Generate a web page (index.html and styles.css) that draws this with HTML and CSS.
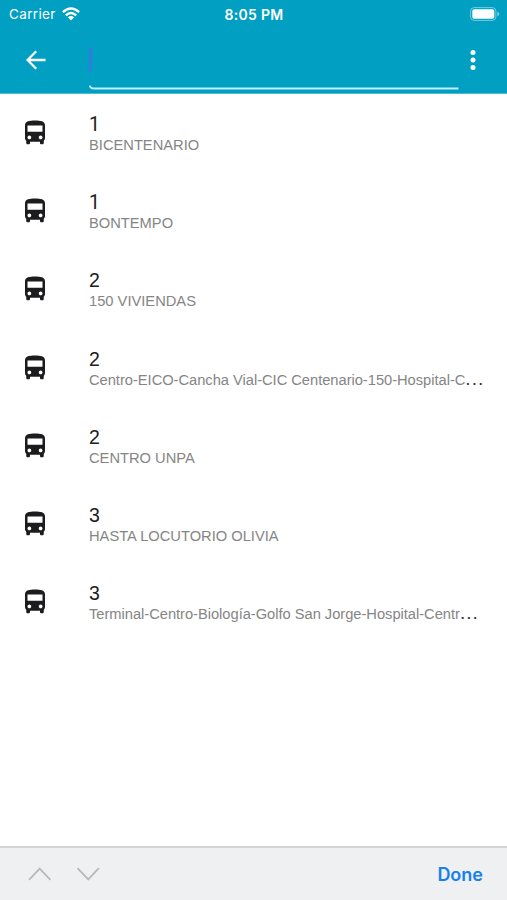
FILE: index.html
```
<!DOCTYPE html>
<html lang="es">
<head>
<meta charset="utf-8">
<title>Recorridos</title>
<link rel="stylesheet" href="styles.css">
</head>
<body>
<svg class="defs" aria-hidden="true">
  <symbol id="bus" viewBox="0 0 24 24"><path d="M4 16c0 .88.39 1.67 1 2.22V20c0 .55.45 1 1 1h1c.55 0 1-.45 1-1v-1h8v1c0 .55.45 1 1 1h1c.55 0 1-.45 1-1v-1.78c.61-.55 1-1.34 1-2.22V6c0-3.5-3.58-4-8-4s-8 .5-8 4v10zm3.5 1c-.83 0-1.5-.67-1.5-1.5S6.67 14 7.5 14s1.5.67 1.5 1.5S8.33 17 7.500 17zm9 0c-.83 0-1.5-.67-1.5-1.500s.67-1.500 1.500-1.500 1.500.67 1.500 1.500-.67 1.500-1.500 1.500zm1.500-6H6V6h12v5z"/></symbol>
</svg>
<header class="header">
  <div class="status">
    <div class="carrier"><span class="carrier-name">Carrier</span>
      <svg class="wifi" viewBox="0 0 18 14"><g fill="none" stroke="#fff" stroke-width="2.300"><path d="M.9 5.200Q9-2.200 17.100 5.200"/><path d="M3.800 8.300Q9 3.600 14.200 8.300"/></g><path fill="#fff" d="M5.900 10.200Q9 7.800 12.100 10.200L9 13.500Z"/></svg>
    </div>
    <time class="time">8:05 PM</time>
    <svg class="battery" viewBox="0 0 30 14"><rect x=".6" y=".6" width="25.300" height="12.800" rx="3.500" fill="none" stroke="#fff" stroke-opacity=".45"/><rect x="2.300" y="2.300" width="22" height="9.400" rx="1.800" fill="#fff"/><path d="M27.300 4.800q2 .7 2 2.200t-2 2.200z" fill="#fff" fill-opacity=".5"/></svg>
  </div>
  <div class="toolbar">
    <svg class="back" viewBox="0 0 20 20"><path d="M19.500 10H2M10.200 1.200 1.500 10l8.700 8.800" fill="none" stroke="#fff" stroke-width="2.300"/></svg>
    <div class="search"><span class="caret"></span><svg class="underline" viewBox="0 0 370 5"><path d="M.5.500Q1.500 3.500 4.500 3.500H369.500" fill="none" stroke="#c0eff8" stroke-width="1.800"/></svg></div>
    <svg class="more" viewBox="0 0 6 20"><g fill="#fff"><circle cx="3" cy="2.600" r="2.500"/><circle cx="3" cy="10" r="2.500"/><circle cx="3" cy="17.400" r="2.500"/></g></svg>
  </div>
</header>
<main class="list">
  <div class="row"><svg class="bus"><use href="#bus"/></svg><div class="label"><div class="number one">1</div><div class="name">BICENTENARIO</div></div></div>
  <div class="row"><svg class="bus"><use href="#bus"/></svg><div class="label"><div class="number one">1</div><div class="name">BONTEMPO</div></div></div>
  <div class="row"><svg class="bus"><use href="#bus"/></svg><div class="label"><div class="number">2</div><div class="name">150 VIVIENDAS</div></div></div>
  <div class="row"><svg class="bus"><use href="#bus"/></svg><div class="label"><div class="number">2</div><div class="name long">Centro-EICO-Cancha Vial-CIC Centenario-150-Hospital-C<span class="dots">...</span></div></div></div>
  <div class="row"><svg class="bus"><use href="#bus"/></svg><div class="label"><div class="number">2</div><div class="name">CENTRO UNPA</div></div></div>
  <div class="row"><svg class="bus"><use href="#bus"/></svg><div class="label"><div class="number">3</div><div class="name">HASTA LOCUTORIO OLIVIA</div></div></div>
  <div class="row"><svg class="bus"><use href="#bus"/></svg><div class="label"><div class="number">3</div><div class="name long">Terminal-Centro-Biología-Golfo San Jorge-Hospital-Centr<span class="dots">...</span></div></div></div>
</main>
<footer class="footer">
  <svg class="chevrons" viewBox="0 0 72 14"><g fill="none" stroke="#b9babd" stroke-width="1.900"><path d="M1 12.800 11.700 1.700 22.400 12.800M49.500 1.200 60.200 12.300 70.900 1.200"/></g></svg>
  <span class="done">Done</span>
</footer>
</body>
</html>
```
FILE: styles.css
```
* { box-sizing: border-box; }
body {
  margin: 0;
  height: 900px;
  display: flex;
  flex-direction: column;
  overflow: hidden;
  background: #fff;
  font-family: "Liberation Sans", Arial, sans-serif;
}
.defs { position: absolute; width: 0; height: 0; }
.header {
  height: 94px;
  flex: none;
  background: #01a0c2;
  border-bottom: 1px solid #4dbdd4;
  color: #fff;
}
.status {
  height: 27px;
  display: grid;
  grid-template-columns: 1fr auto 1fr;
  align-items: center;
  padding: 0 7px 0 9px;
  font: 500 13.5px/27px Inter, sans-serif;
}
.carrier { display: flex; align-items: center; gap: 6px; }
.carrier-name { font-weight: 400; letter-spacing: .35px; padding-top: 1px; }
.wifi { width: 18px; height: 14px; }
.time { font-weight: 600; font-size: 14px; letter-spacing: .3px; padding-top: 1px; margin-right: 1px; }
.battery { width: 30px; height: 14px; justify-self: end; }
.toolbar { height: 66px; display: flex; align-items: flex-start; padding-left: 26px; }
.back { width: 20px; height: 20px; margin-top: 23px; flex: none; }
.search {
  width: 370px;
  height: 47px;
  margin: 16px 0 0 43px;
  display: flex;
  flex-direction: column;
  justify-content: space-between;
}
.caret { width: 3px; height: 25px; margin-top: 4px; background: #327be0; }
.underline { width: 370px; height: 5px; }
.more { width: 6px; height: 20px; margin: 23px 0 0 11px; }
.list { flex: 1; }
.row { height: 78.200px; display: flex; padding-left: 20px; }
.bus { width: 30px; height: 30px; margin: 24px 39px 0 0; flex: none; fill: #1c1c1e; }
.label { padding-top: 19px; white-space: nowrap; }
.number { font-size: 19.500px; line-height: 23px; color: #202020; }
.one { font-family: Roboto, sans-serif; }
.name { font-size: 14.700px; line-height: 18px; color: #858585; }
.long { letter-spacing: -.025px; }
.dots { font-size: 19px; line-height: 0; letter-spacing: 1px; color: #333; }
.footer {
  height: 54px;
  flex: none;
  display: flex;
  align-items: center;
  justify-content: space-between;
  padding: 0 24px 0 28px;
  background: #eff0f2;
  border-top: 2px solid #d3d4d6;
}
.chevrons { width: 72px; height: 14px; }
.done { padding-top: 1px; font: 600 18px/24px Inter, sans-serif; color: #1680ec; }
```
